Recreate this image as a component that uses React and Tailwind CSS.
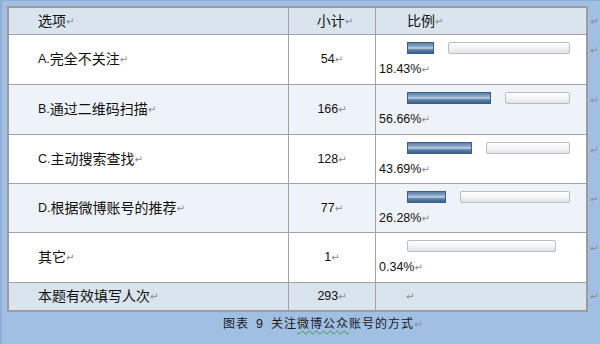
const rows = [
  { pre: "A.", label: "完全不关注", count: "54", pct: "18.43%", bar: 27, h: "h-[50px]", bg: "bg-white", mark: 50 },
  { pre: "B.", label: "通过二维码扫描", count: "166", pct: "56.66%", bar: 84, h: "h-[50px]", bg: "bg-[#eef3f9]", mark: 50 },
  { pre: "C.", label: "主动搜索查找", count: "128", pct: "43.69%", bar: 65, h: "h-[49px]", bg: "bg-white", mark: 49 },
  { pre: "D.", label: "根据微博账号的推荐", count: "77", pct: "26.28%", bar: 39, h: "h-[49px]", bg: "bg-[#eef3f9]", mark: 49 },
  { pre: "", label: "其它", count: "1", pct: "0.34%", bar: 0, h: "h-[50px]", bg: "bg-white", mark: 50 },
];

const Mark = ({ className = "" }) => (
  <span className={`text-[10px] text-[#8a8a8a] font-['DejaVu_Sans'] ${className}`}>↵</span>
);

const Latin = ({ children }) => (
  <span className="text-[12.5px] font-['Liberation_Sans']">{children}</span>
);

function Bar({ value }) {
  return (
    <div className="flex h-[12px] pl-[31px]">
      {value > 0 && (
        <div
          className="h-full border border-[#3a5f8a] bg-[linear-gradient(to_bottom,#5b7fa8,#8eaac8_35%,#c6d5e5_50%,#5d80a9_68%,#3a6291)]"
          style={{ width: value }}
        />
      )}
      <div
        className={`h-full rounded-[2px] border border-[#b9bcc0] bg-[linear-gradient(to_bottom,#ffffff,#f3f4f6_50%,#e0e3e7)] ${value > 0 ? "ml-[14px]" : ""}`}
        style={{ width: 149 - value }}
      />
    </div>
  );
}

export default function App() {
  return (
    <div className="w-[600px] h-[344px] bg-[#a0bfe3] border-l-2 border-t border-l-[#8eaed8] border-t-[#8eaed8] pt-[5px] font-['Liberation_Sans','Noto_Sans_CJK_SC',sans-serif] text-[14px] text-[#111] overflow-hidden">
      <div className="flex">
        <div className="ml-[5px] w-[581px] border-2 border-[#9c9c9c]">
          {/* header */}
          <div className="flex h-[27px] bg-[#d9e4ee] border-b border-[#a3a3a3]">
            <div className="w-[280px] border-r border-[#a3a3a3] pl-[29px] flex items-center">
              选项<Mark />
            </div>
            <div className="w-[87px] border-r border-[#a3a3a3] flex items-center justify-center pl-[6px]">
              小计<Mark />
            </div>
            <div className="flex-1 pl-[31px] flex items-center">
              比例<Mark />
            </div>
          </div>

          {rows.map((r) => (
            <div key={r.label} className={`flex ${r.h} ${r.bg} border-b border-[#a3a3a3]`}>
              <div className="w-[280px] border-r border-[#a3a3a3] pl-[29px] flex items-center">
                {r.pre && <Latin>{r.pre}</Latin>}
                {r.label}
                <Mark />
              </div>
              <div className="w-[87px] border-r border-[#a3a3a3] flex items-center justify-center">
                <Latin>{r.count}</Latin>
                <Mark />
              </div>
              <div className="flex-1 pt-[7px]">
                <Bar value={r.bar} />
                <div className="pl-[3px] mt-[6px] leading-[16px]">
                  <Latin>{r.pct}</Latin>
                  <Mark />
                </div>
              </div>
            </div>
          ))}

          {/* total */}
          <div className="flex h-[27px] bg-[#d9e4ee]">
            <div className="w-[280px] border-r border-[#a3a3a3] pl-[29px] flex items-center">
              本题有效填写人次<Mark />
            </div>
            <div className="w-[87px] border-r border-[#a3a3a3] flex items-center justify-center">
              <Latin>293</Latin>
              <Mark />
            </div>
            <div className="flex-1 pl-[30px] flex items-center">
              <Mark />
            </div>
          </div>
        </div>

        {/* paragraph marks outside the table */}
        <div className="flex flex-col pt-[2px] pl-[2px]">
          <div className="h-[27px] flex items-center">
            <Mark className="text-[#5e6f85]" />
          </div>
          {rows.map((r) => (
            <div key={r.label} style={{ height: r.mark }} className="pt-[7px] leading-[14px]">
              <Mark className="text-[#5e6f85]" />
            </div>
          ))}
          <div className="h-[27px] flex items-center">
            <Mark className="text-[#5e6f85]" />
          </div>
        </div>
      </div>

      <div className="ml-[221px] mt-[4px] leading-[16px] text-[12px] tracking-[1px] text-[#1a1a1a] flex items-baseline">
        <span>图表</span>
        <span className="mx-[7px]"><Latin>9</Latin></span>
        <span>关注</span>
        <span className="underline decoration-wavy decoration-[#3c9a3c] decoration-1 underline-offset-2">微博公众</span>
        <span>账号的方式</span>
        <Mark />
      </div>
    </div>
  );
}
